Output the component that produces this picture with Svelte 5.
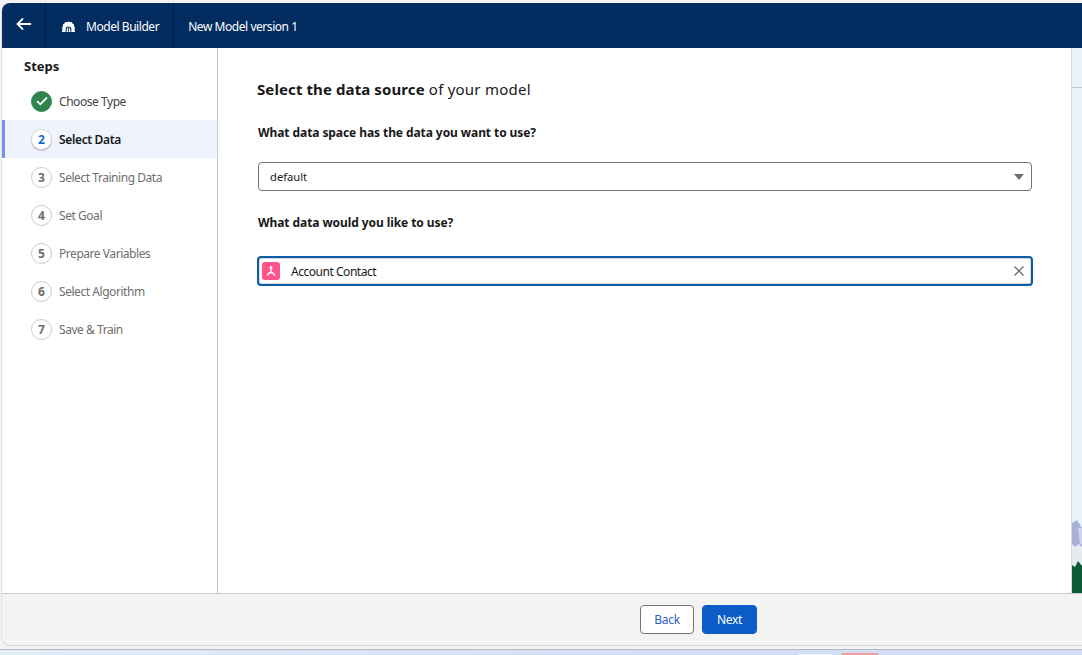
<script>
    const steps = [
        { n: 1, label: "Choose Type", state: "done" },
        { n: 2, label: "Select Data", state: "active" },
        { n: 3, label: "Select Training Data", state: "todo" },
        { n: 4, label: "Set Goal", state: "todo" },
        { n: 5, label: "Prepare Variables", state: "todo" },
        { n: 6, label: "Select Algorithm", state: "todo" },
        { n: 7, label: "Save & Train", state: "todo" }
    ];
</script>

<div class="page">
    <div class="window">
        <header class="topbar">
            <button class="back" aria-label="Back">
                <svg width="16" height="14" viewBox="0 0 16 14">
                    <path d="M1.500 7H15M7 1.500 1.500 7 7 12.500" fill="none" stroke="#fff" stroke-width="1.800" />
                </svg>
            </button>
            <div class="crumb app">
                <svg width="13" height="12" viewBox="0 0 14 12">
                    <path d="M7 0 9 .8 10.500 .5 11.500 2.500 13 3 12.800 5 14 6.500 13.500 8.500 14 11.500H0L.5 8.500 0 6.500 1.200 5 1 3 2.500 2.500 3.500 .5 5 .8Z" fill="#fff" />
                    <path d="M4.500 11V8.500A2.500 2.500 0 0 1 9.500 8.500V11" fill="none" stroke="#032d60" stroke-width="1.200" />
                    <path d="M7 7V11" stroke="#032d60" stroke-width="1" />
                </svg>
                <span>Model Builder</span>
            </div>
            <div class="crumb">New Model version 1</div>
        </header>

        <div class="middle">
            <div class="content">
                <aside class="sidebar">
                    <h2>Steps</h2>
                    <ul>
                        {#each steps as step}
                            <li class={step.state}>
                                {#if step.state === "done"}
                                    <span class="badge check">
                                        <svg width="12" height="10" viewBox="0 0 12 10">
                                            <path d="M1 5.200 4.300 8.300 11 1.500" fill="none" stroke="#fff" stroke-width="1.800" />
                                        </svg>
                                    </span>
                                {:else}
                                    <span class="badge">{step.n}</span>
                                {/if}
                                <span>{step.label}</span>
                            </li>
                        {/each}
                    </ul>
                </aside>

                <main class="main">
                    <h1><b>Select the data source</b> of your model</h1>
                    <p class="question first">What data space has the data you want to use?</p>
                    <div class="select">
                        <span>default</span>
                        <svg width="10" height="6" viewBox="0 0 10 6"><path d="M0 0H10L5 6Z" fill="#706e6b" /></svg>
                    </div>
                    <p class="question second">What data would you like to use?</p>
                    <div class="picked">
                        <span class="obj">
                            <svg width="12" height="12" viewBox="0 0 12 12">
                                <path d="M6 3V6.800L1.800 10.500M6 6.800l4.200 3.700M3.300 7.800h5.400" fill="none" stroke="#fff" stroke-width="1.200" />
                                <circle cx="6" cy="2.500" r="1.500" fill="#fff" />
                            </svg>
                        </span>
                        <span class="value">Account Contact</span>
                        <svg class="clear" width="10" height="10" viewBox="0 0 10 10">
                            <path d="M.5.500l9 9m0-9-9 9" stroke="#706e6b" stroke-width="1.300" />
                        </svg>
                    </div>
                </main>
            </div>

            <div class="strip">
                <svg width="10" height="73" viewBox="0 0 10 73">
                    <path d="M0 3 5 0 10 8V30H0Z" fill="#a9b2d6" />
                    <path d="M6 8 10 8V24H8Z" fill="#cdd6ee" />
                    <path d="M0 24 3 27 7 24 10 27V48H0Z" fill="#e6ebef" />
                    <path d="M0 45 3 47 6 41 10 46V73H0Z" fill="#0c5a35" />
                </svg>
            </div>
        </div>

        <footer class="footer">
            <button class="btn">Back</button>
            <button class="btn primary">Next</button>
        </footer>
    </div>

    <div class="taskbar">
        <span class="tab white"></span>
        <span class="tab salmon"></span>
    </div>
</div>

<style>
:global(body){
    margin: 0;
}

*{
    box-sizing: border-box;
}

.page{
    height: 655px;
    overflow: hidden;
    padding-top: 3px;
    background: #f3f3f3;
    font-family: "Noto Sans", "Open Sans", sans-serif;
    font-size: 12px;
    color: #181818;
}

.window{
    height: 642px;
    margin-left: 2px;
    display: flex;
    flex-direction: column;
    border-radius: 8px 0 0 8px;
    overflow: hidden;
    box-shadow: 0 1px 0 #d5d5d5, -1px 0 0 #e2e2e2;
}

/* Barra superior */
.topbar{
    height: 45px;
    flex: none;
    display: flex;
    background: #032d60;
    color: #fff;
}

.back{
    width: 44px;
    padding: 0;
    background: none;
    border: none;
    border-right: 1px solid #011f44;
}

.crumb{
    display: flex;
    align-items: center;
    padding: 2px 14px 0;
    letter-spacing: -0.45px;
    border-right: 1px solid #011f44;
}

.crumb:last-child{
    border-right: none;
}

.app{
    gap: 11px;
    padding-left: 16px;
}

.middle{
    flex: 1;
    min-height: 0;
    display: flex;
}

.content{
    flex: 1;
    display: flex;
    background: #fff;
}

/* Pasos */
.sidebar{
    width: 216px;
    flex: none;
    border-right: 1px solid #c9c9c9;
}

h2{
    margin: 0;
    padding: 10px 0 0 22px;
    height: 34px;
    font-size: 13px;
    font-weight: 700;
    line-height: 17px;
}

ul{
    margin: 0;
    padding: 0;
    list-style: none;
}

li{
    height: 38px;
    display: flex;
    align-items: center;
    gap: 7px;
    padding-left: 29px;
    color: #706e6b;
    letter-spacing: -0.45px;
}

li.done{
    color: #444;
}

li.active{
    padding-left: 26px;
    background: #eef3fd;
    border-left: 3px solid #7f8ff8;
    color: #181818;
    font-weight: 600;
    letter-spacing: -0.35px;
}

.badge{
    width: 21px;
    height: 21px;
    flex: none;
    display: flex;
    align-items: center;
    justify-content: center;
    background: #fff;
    border: 1px solid #c9c9c9;
    border-radius: 50%;
    color: #706e6b;
    font-weight: 700;
    letter-spacing: 0;
}

.active .badge{
    color: #0b6dd0;
    border-color: #d8d8d8;
    box-shadow: 0 1px 1px #bbb;
}

.check{
    background: #2e844a;
    border-color: #2e844a;
}

/* Contenido principal */
.main{
    flex: 1;
    padding: 0 38px 0 39px;
}

h1{
    margin: 0;
    padding-top: 31px;
    font-size: 15px;
    line-height: 21px;
    font-weight: 400;
    letter-spacing: 0.23px;
}

h1 b{
    font-weight: 700;
    letter-spacing: 0.1px;
}

.question{
    margin: 0;
    padding-left: 1px;
    font-size: 12px;
    font-weight: 700;
    line-height: 18px;
    letter-spacing: -0.08px;
}

.question.first{
    padding-top: 24px;
    height: 62px;
}

.question.second{
    padding-top: 23px;
    height: 65px;
}

.select{
    height: 29px;
    margin: 0 1px;
    display: flex;
    align-items: center;
    justify-content: space-between;
    padding: 0 7px 0 11px;
    border: 1px solid #747474;
    border-radius: 4px;
    font-size: 11.200px;
}

.picked{
    height: 30px;
    display: flex;
    align-items: center;
    padding: 0 7px 0 3px;
    border: 2px solid #0b5cab;
    border-radius: 4px;
    box-shadow: inset 0 0 0 1px #d8d8d8;
}

.obj{
    width: 18px;
    height: 18px;
    flex: none;
    display: flex;
    align-items: center;
    justify-content: center;
    background: #ff538a;
    border-radius: 3px;
}

.value{
    flex: 1;
    margin-left: 11px;
    letter-spacing: -0.47px;
}

/* Franja derecha */
.strip{
    width: 11px;
    flex: none;
    display: flex;
    flex-direction: column;
    justify-content: flex-end;
    background: linear-gradient(#e8f2fb 39px, #c9c9c9 39px, #c9c9c9 40px, #e8f2fb 40px);
    border-left: 1px solid #d8d8d8;
}

.strip svg{
    display: block;
}

/* Pie */
.footer{
    height: 52px;
    flex: none;
    display: flex;
    align-items: center;
    justify-content: center;
    gap: 8px;
    padding-left: 313px;
    background: #f3f3f3;
    border-top: 1px solid #c9c9c9;
}

.btn{
    width: 54px;
    height: 29px;
    padding: 0;
    background: #fff;
    border: 1px solid #747474;
    border-radius: 4px;
    color: #2f5fc0;
    font: inherit;
    letter-spacing: -0.3px;
}

.primary{
    width: 55px;
    background: #0b5cc7;
    border-color: #0b5cc7;
    color: #fff;
}

/* Barra inferior del sistema */
.taskbar{
    height: 6px;
    margin-top: 4px;
    position: relative;
    background: linear-gradient(90deg, #e3edf8, #d3def3 60%, #d3def3);
    border-top: 1px solid #b4b9c4;
}

.tab{
    position: absolute;
    border-radius: 3px 3px 0 0;
}

.white{
    left: 798px;
    top: 4px;
    width: 35px;
    height: 2px;
    background: #f4f6fb;
}

.salmon{
    left: 841px;
    top: 3px;
    width: 38px;
    height: 3px;
    background: #ee9f97;
}
</style>
